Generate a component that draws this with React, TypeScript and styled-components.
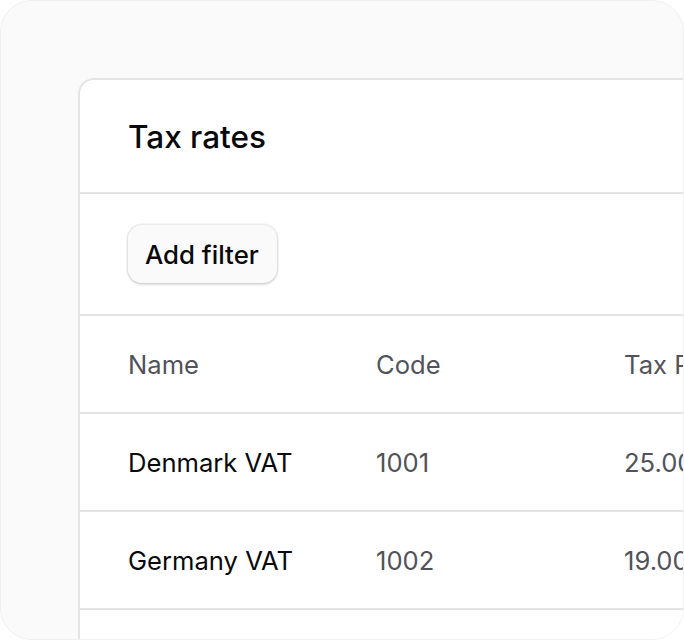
import React from "react";
import styled, { createGlobalStyle } from "styled-components";

const Global = createGlobalStyle`
  html, body { margin: 0; padding: 0; background: #ffffff; }
  body { font-family: Inter, "Noto Sans", sans-serif; -webkit-font-smoothing: antialiased; }
`;

const Frame = styled.div`
  width: 684px;
  height: 640px;
  box-sizing: border-box;
  border-radius: 32px;
  background: #fafafa;
  border: 1px solid #f0f0f0;
  overflow: hidden;
  padding: 77px 0 0 77px;
`;

const Card = styled.div`
  width: 760px;
  height: 700px;
  box-sizing: border-box;
  background: #ffffff;
  border: 2px solid #e4e4e7;
  border-radius: 16px;
  display: flex;
  flex-direction: column;
`;

const Header = styled.div`
  height: 112px;
  display: flex;
  align-items: center;
  padding-left: 48px;
  border-bottom: 2px solid #e4e4e7;
`;

const Title = styled.h2`
  margin: 0;
  font-size: 31.5px;
  font-weight: 500;
  color: #09090b;
`;

const Toolbar = styled.div`
  height: 120px;
  display: flex;
  align-items: center;
  padding-left: 48px;
  border-bottom: 2px solid #e4e4e7;
`;

const Button = styled.button`
  height: 58px;
  padding: 0 18px 0 17px;
  border: none;
  border-radius: 14px;
  background: #fafafa;
  font-family: inherit;
  font-size: 25.8px;
  font-weight: 500;
  color: #09090b;
  box-shadow: 0 0 0 1.5px rgba(0, 0, 0, 0.08), 0 2px 3px rgba(0, 0, 0, 0.1);
`;

const Row = styled.div<{ $head?: boolean }>`
  height: 96px;
  display: grid;
  grid-template-columns: 248px 248px 248px;
  align-items: center;
  padding-left: 48px;
  border-bottom: 2px solid #e4e4e7;
  font-size: 25.6px;
  font-weight: 400;
  color: ${(p) => (p.$head ? "#52525b" : "#09090b")};
`;

const Cell = styled.div<{ $subtle?: boolean }>`
  white-space: nowrap;
  color: ${(p) => (p.$subtle ? "#52525b" : "inherit")};
`;

const rows = [
  { name: "Denmark VAT", code: "1001", rate: "25.00%" },
  { name: "Germany VAT", code: "1002", rate: "19.00%" },
];

export default function App() {
  return (
    <>
      <Global />
      <Frame>
        <Card>
          <Header>
            <Title>Tax rates</Title>
          </Header>
          <Toolbar>
            <Button>Add filter</Button>
          </Toolbar>
          <Row $head>
            <Cell>Name</Cell>
            <Cell>Code</Cell>
            <Cell>Tax Rate</Cell>
          </Row>
          {rows.map((r) => (
            <Row key={r.code}>
              <Cell>{r.name}</Cell>
              <Cell $subtle>{r.code}</Cell>
              <Cell $subtle>{r.rate}</Cell>
            </Row>
          ))}
          <Row />
        </Card>
      </Frame>
    </>
  );
}
